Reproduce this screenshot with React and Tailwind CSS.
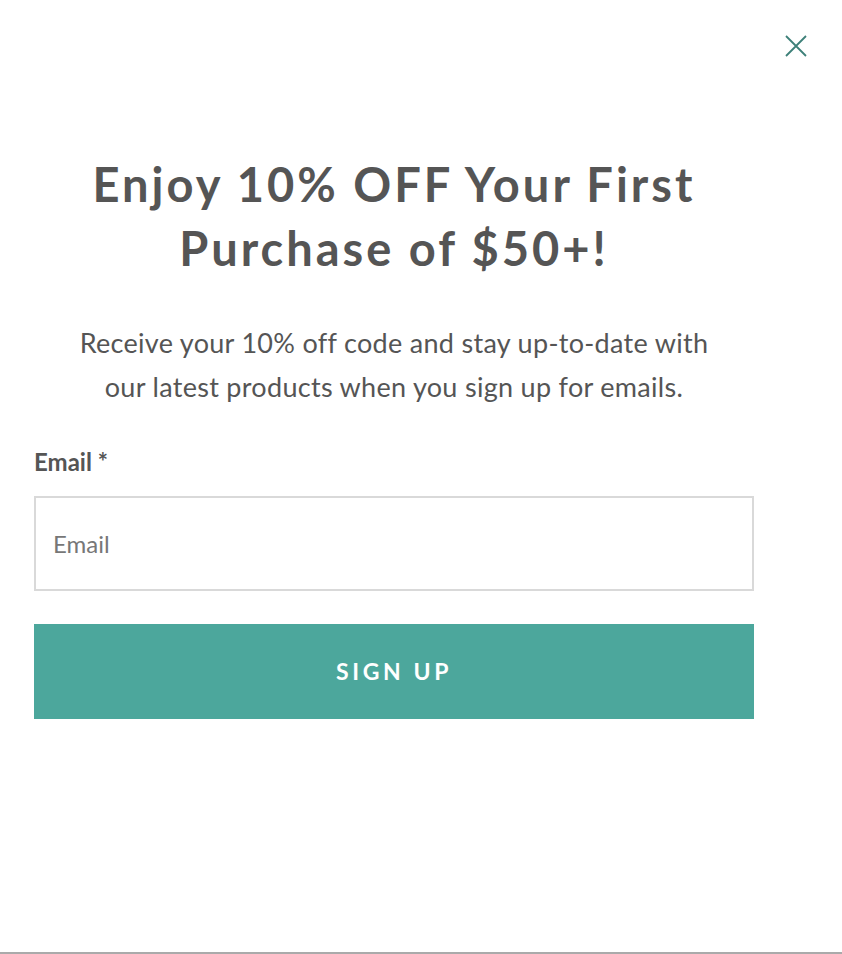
import React, { useState } from 'react'

function App() {
  const [email, setEmail] = useState("");

  return (
    <div className="relative w-[842px] h-[954px] bg-white border-b-2 border-[#aaaaaa] font-['Lato','Noto_Sans',sans-serif] text-[#555555]">
      <button className="absolute right-[34px] top-[34px] w-[24px] h-[24px] flex items-center justify-center">
        <svg width="24" height="24" viewBox="0 0 24 24" fill="none" stroke="#3d8079" strokeWidth="1.8">
          <path d="M2 2 L22 22 M22 2 L2 22" />
        </svg>
      </button>

      <section className="w-[720px] ml-[34px] pt-[152px] flex flex-col">
        <h1 className="text-center font-bold text-[47px] leading-[64px] tracking-[3px]">
          Enjoy 10% OFF Your First
          <br />
          Purchase of $50+!
        </h1>

        <p className="mt-[41px] text-center text-[27px] leading-[44px] tracking-[0.3px]">
          Receive your 10% off code and stay up-to-date with
          <br />
          our latest products when you sign up for emails.
        </p>

        <label className="mt-[38px] block font-bold text-[24px] leading-[30px]">Email *</label>
        <input
          value={email}
          onChange={(e) => setEmail(e.target.value)}
          placeholder="Email"
          className="mt-[19px] w-full h-[95px] px-[17px] border-2 border-[#d9d9d9] text-[24px] text-[#555555] placeholder:text-[#777777] outline-none"
        />

        <button className="mt-[33px] w-full h-[95px] bg-[#4ca79c] text-white font-bold text-[23px] tracking-[3.6px]">
          SIGN UP
        </button>
      </section>
    </div>
  );
}

export default App;
